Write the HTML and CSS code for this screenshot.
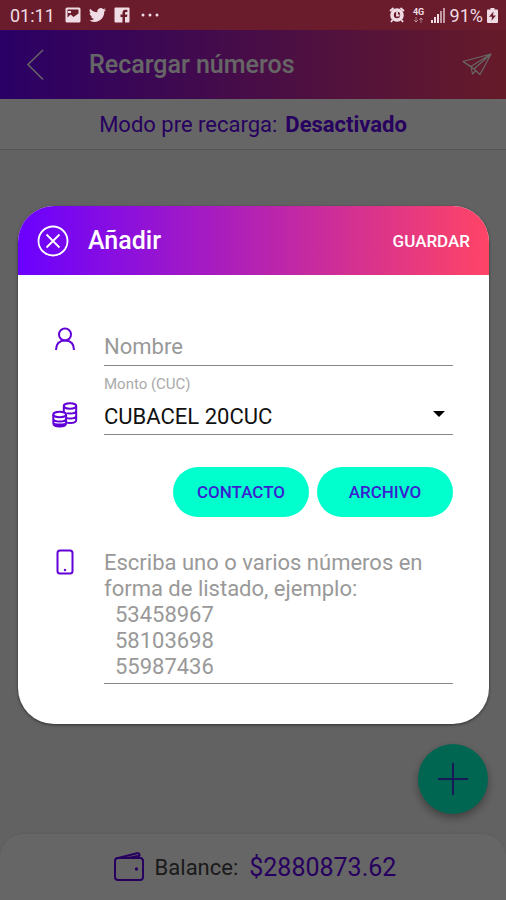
FILE: index.html
```html
<!DOCTYPE html>
<html lang="es">
<head>
<meta charset="utf-8">
<meta name="viewport" content="width=device-width, initial-scale=1">
<title>Recargar números</title>
<link rel="stylesheet" href="styles.css">
</head>
<body>
<div class="screen">
  <div class="status">
    <span class="clock">01:11</span>
    <svg class="status-icon" width="16" height="16" viewBox="0 0 16 16" aria-hidden="true"><path fill="currentColor" fill-rule="evenodd" d="M2 .5h12Q15.500 .5 15.500 2v12q0 1.500-1.500 1.500H2Q.5 15.500 .5 14V2Q.5 .5 2 .5zM2.500 2.500v8l3-3 3 2.500 5-3.500v-4z"/><path fill="currentColor" d="M3 4h3v2H3z"/></svg>
    <svg class="status-icon" width="17" height="16" viewBox="0 2 24 20" aria-hidden="true"><path fill="currentColor" d="M23.950 4.570a10 10 0 0 1-2.820.77 4.960 4.960 0 0 0 2.160-2.720c-.95.560-2 .960-3.130 1.190a4.920 4.920 0 0 0-8.380 4.480C7.690 8.100 4.070 6.130 1.640 3.160a4.920 4.920 0 0 0 1.520 6.570 4.900 4.900 0 0 1-2.230-.610v.060a4.920 4.920 0 0 0 3.950 4.830 5 5 0 0 1-2.210.080 4.940 4.940 0 0 0 4.600 3.420A9.870 9.870 0 0 1 0 19.540a13.990 13.990 0 0 0 7.550 2.210c9.050 0 14-7.500 14-13.980 0-.210 0-.420-.020-.630a9.940 9.940 0 0 0 2.460-2.550z"/></svg>
    <svg class="status-icon" width="16" height="16" viewBox="0 0 16 16" aria-hidden="true"><path fill="currentColor" d="M1.500 .5h13q1 0 1 1v13q0 1-1 1H11V10h2l.4-2.400H11V6.200q0-1.200 1.200-1.200h1.200V2.800h-2q-2.900 0-2.900 3v1.800h-2V10h2v5.500h-7q-1 0-1-1v-13q0-1 1-1z"/></svg>
    <svg class="dots" width="18" height="4" viewBox="0 0 18 4" aria-hidden="true"><g fill="currentColor"><circle cx="2" cy="2" r="1.500"/><circle cx="9" cy="2" r="1.500"/><circle cx="16" cy="2" r="1.500"/></g></svg>
    <div class="status-right">
      <svg width="16" height="16" viewBox="0 0 16 16" aria-hidden="true"><circle cx="8" cy="8" r="5" fill="none" stroke="currentColor" stroke-width="3.600"/><path d="M8 5v3.500h2.500M1 4l3.500-3M15 4l-3.500-3M3.500 13 2 15M12.500 13l1.500 2" fill="none" stroke="currentColor" stroke-width="1.800"/></svg>
      <span class="network"><span>4G</span><svg width="11" height="6" viewBox="0 0 11 6" aria-hidden="true"><path d="M3 0v5M1 3l2 2 2-2M8 6V1M6 3l2-2 2 2" fill="none" stroke="currentColor" opacity=".5"/></svg></span>
      <svg width="15" height="15" viewBox="0 0 15 15" aria-hidden="true"><g fill="currentColor"><path d="M0 12h2v3H0zM3 9h2v6H3zM6 6h2v9H6z"/><path opacity=".65" d="M9 3h2v12H9zM12 0h2v15h-2z"/></g></svg>
      <span class="percent">91%</span>
      <svg width="11" height="15" viewBox="0 0 11 15" aria-hidden="true"><path fill="currentColor" fill-rule="evenodd" d="M3.500 0h4v1.500H10q1 0 1 1V14q0 1-1 1H1q-1 0-1-1V2.500q0-1 1-1h2.500zM6.500 3.500 2 8.700h3l-.5 4L9 7.500H6z"/></svg>
    </div>
  </div>

  <main class="page">
    <header class="bar">
      <button class="icon-button back" aria-label="Atrás"><svg width="18" height="32" viewBox="0 0 18 32" aria-hidden="true"><path d="M17 1 2 15.500 17 30.500" fill="none" stroke="currentColor" stroke-width="1.500"/></svg></button>
      <h1 class="title">Recargar números</h1>
      <button class="icon-button send" aria-label="Enviar"><svg width="30" height="23" viewBox="0 0 30 23" aria-hidden="true"><path d="M1 8.500 29 1 18 21.500l-6-5.500zM1 8.500l8 5L29 1 12 16M9 13.500l1.500 7.500 3.500-3.500" fill="none" stroke="currentColor" stroke-width="1.200" stroke-linejoin="round"/></svg></button>
    </header>
    <p class="mode">Modo pre recarga: <strong>Desactivado</strong></p>
    <div class="content">
      <button class="fab" aria-label="Agregar"><svg width="30" height="32" viewBox="0 0 30 32" aria-hidden="true"><path d="M15 0v32M0 16h30" stroke="currentColor" stroke-width="1.500"/></svg></button>
    </div>
    <footer class="balance">
      <svg width="30" height="30" viewBox="0 0 30 30" aria-hidden="true"><g fill="none" stroke="currentColor" stroke-width="2" stroke-linejoin="round"><rect x="1" y="6" width="28" height="22" rx="3"/><path d="M2 6.500 23 1.300q2.500-.6 2.500 1.500v1L14 6"/></g><circle cx="22.500" cy="17" r="1.700" fill="currentColor"/></svg>
      <span class="balance-label">Balance:</span>
      <span class="amount">$2880873.62</span>
    </footer>

    <div class="backdrop">
      <form class="dialog" role="dialog" aria-labelledby="dialog-title">
        <div class="dialog-head">
          <button type="button" class="icon-button close" aria-label="Cerrar"><svg width="32" height="32" viewBox="0 0 32 32" aria-hidden="true"><g fill="none" stroke="currentColor" stroke-width="1.800"><circle cx="16" cy="16" r="14.500"/><path d="m9.500 9.500 13 13M22.500 9.500l-13 13"/></g></svg></button>
          <h2 class="title" id="dialog-title">Añadir</h2>
          <button type="button" class="save">GUARDAR</button>
        </div>
        <div class="fields">
          <label class="glyph person" for="nombre" aria-label="Nombre"><svg width="22" height="24" viewBox="0 0 22 24" aria-hidden="true"><g fill="none" stroke="currentColor" stroke-width="2"><circle cx="11" cy="7.500" r="6"/><path d="M2 23q0-9.500 9-9.500t9 9.500"/></g></svg></label>
          <input class="control" id="nombre" type="text" placeholder="Nombre">

          <label class="caption" for="monto">Monto (CUC)</label>
          <span class="glyph coins"><svg width="26" height="26" viewBox="0 0 26 26" aria-hidden="true"><g fill="none" stroke="currentColor" stroke-width="2"><ellipse cx="18" cy="4" rx="6.200" ry="2.700"/><path d="M11.800 4v6M24.200 4v14q0 3-6.200 3-2 0-3.500-.4M24.200 8.500q0 3-6.200 3-2 0-3-.4M24.200 13.500q0 3-6.200 3-2 0-3-.4"/><ellipse cx="7.700" cy="12.500" rx="6.400" ry="2.700"/><path d="M1.300 12.500V21q0 3.500 6.400 3.500t6.400-3.500v-8.500M1.300 16.500q0 3 6.400 3t6.400-3M1.300 20.500q0 2 6.400 2t6.400-2"/></g></svg></span>
          <div class="select-wrap">
            <select class="control" id="monto"><option>CUBACEL 20CUC</option></select>
            <svg class="caret" width="12" height="6" viewBox="0 0 12 6" aria-hidden="true"><path d="M0 0h12L6 6z" fill="currentColor"/></svg>
          </div>

          <div class="actions">
            <button type="button" class="pill">CONTACTO</button>
            <button type="button" class="pill">ARCHIVO</button>
          </div>

          <label class="glyph phone" for="numeros" aria-label="Números"><svg width="18" height="26" viewBox="0 0 18 26" aria-hidden="true"><rect x="1.500" y="1.500" width="15" height="23" rx="2.500" fill="none" stroke="currentColor" stroke-width="2"/><circle cx="9" cy="21" r="1.200" fill="currentColor"/></svg></label>
          <textarea class="control numbers" id="numeros" rows="5" placeholder="Escriba uno o varios números en forma de listado, ejemplo:&#10;  53458967&#10;  58103698&#10;  55987436"></textarea>
        </div>
      </form>
    </div>
  </main>
</div>
</body>
</html>
```
FILE: styles.css
```css
* {
  box-sizing: border-box;
}

body {
  margin: 0;
  font-family: Roboto, "Liberation Sans", sans-serif;
  color: #000;
}

button,
input,
select,
textarea {
  font: inherit;
  border: 0;
  margin: 0;
  padding: 0;
  background: none;
}

h1,
h2,
p {
  margin: 0;
}

svg {
  display: block;
  flex: none;
}

.screen {
  min-height: 100vh;
  display: flex;
  flex-direction: column;
}

.status {
  height: 30px;
  padding: 0 8px 0 10px;
  display: flex;
  align-items: center;
  background: #6a1c2c;
  color: #f0dce4;
  font-size: 18px;
}

.clock {
  margin-right: 10px;
}

.status-icon {
  margin-right: 8px;
}

.dots {
  margin-left: 3px;
}

.status-right {
  margin-left: auto;
  display: flex;
  align-items: center;
  gap: 4px;
}

.network {
  width: 12px;
  margin: 0 2px 0 4px;
  display: flex;
  flex-direction: column;
  align-items: center;
  font-size: 9px;
  font-weight: 700;
  line-height: 9px;
}

.page {
  position: relative;
  flex: 1;
  display: flex;
  flex-direction: column;
  background: #f5f5f5;
}

.bar,
.dialog-head {
  display: flex;
  align-items: center;
  background: linear-gradient(90deg, #6a00ff, #ff4466);
  color: #fff;
}

.bar {
  height: 69px;
  padding: 0 14px 0 26px;
}

.title {
  flex: 1;
  font-size: 25px;
  font-weight: 500;
}

.icon-button {
  color: inherit;
}

.back {
  margin-right: 45px;
}

.mode {
  height: 51px;
  display: flex;
  align-items: center;
  justify-content: center;
  gap: 8px;
  background: #fff;
  border-bottom: 1px solid #d2d2d2;
  color: #6200ee;
  font-size: 22px;
}

.mode strong {
  font-weight: 700;
}

.content {
  flex: 1;
  display: flex;
  align-items: flex-end;
  justify-content: flex-end;
  padding: 20px 18px;
}

.fab {
  width: 70px;
  height: 70px;
  display: grid;
  place-items: center;
  border-radius: 50%;
  background: #00ffcc;
  color: #5200e0;
  box-shadow: 0 4px 8px rgba(0, 0, 0, 0.35);
}

.balance {
  height: 66px;
  padding-left: 4px;
  display: flex;
  align-items: center;
  justify-content: center;
  gap: 11px;
  border-radius: 24px 24px 0 0;
  background: #fff;
  box-shadow: 0 -1px 3px rgba(0, 0, 0, 0.06);
  font-size: 22px;
}

.balance svg,
.amount {
  color: #6200ee;
}

.balance-label {
  color: #444;
}

.amount {
  font-size: 25px;
}

.backdrop {
  position: absolute;
  inset: 0;
  display: flex;
  align-items: center;
  padding: 0 17px 0 18px;
  background: rgba(0, 0, 0, 0.6);
}

.dialog {
  flex: 1;
  min-width: 0;
  overflow: hidden;
  border-radius: 36px;
  background: #fff;
  box-shadow: 0 1px 3px rgba(0, 0, 0, 0.5);
}

.dialog-head {
  height: 69px;
  padding: 0 19px;
}

.close {
  margin-right: 19px;
}

.save {
  font-size: 17px;
  font-weight: 500;
  color: inherit;
}

.fields {
  display: grid;
  grid-template-columns: 86px 1fr;
  padding: 52px 36px 40px 0;
}

.glyph {
  grid-column: 1;
  display: flex;
  justify-content: center;
  align-items: flex-start;
  padding-left: 8px;
  color: #6200d8;
}

.coins {
  padding-top: 9px;
}

.control {
  display: block;
  width: 100%;
  height: 39px;
  border-bottom: 1px solid #888;
  border-radius: 0;
  outline: 0;
  appearance: none;
  font-size: 22px;
  color: #111;
}

.control::placeholder {
  color: #999;
  opacity: 1;
}

.caption {
  grid-column: 2;
  padding-top: 9px;
  font-size: 15px;
  line-height: 18px;
  color: #aaa;
}

.select-wrap {
  display: grid;
  align-items: center;
}

.select-wrap > * {
  grid-area: 1 / 1;
}

.select-wrap .control {
  height: 42px;
  padding-top: 5px;
}

.caret {
  justify-self: end;
  margin-right: 8px;
  pointer-events: none;
}

.actions {
  grid-column: 2;
  display: flex;
  justify-content: flex-end;
  gap: 8px;
  padding: 32px 0;
}

.pill {
  width: 136px;
  height: 50px;
  border-radius: 25px;
  background: #00ffcc;
  color: #3a1fd0;
  font-size: 17px;
  font-weight: 500;
}

.numbers {
  height: 135px;
  padding-top: 1px;
  line-height: 26px;
  resize: none;
  overflow: hidden;
}
```
